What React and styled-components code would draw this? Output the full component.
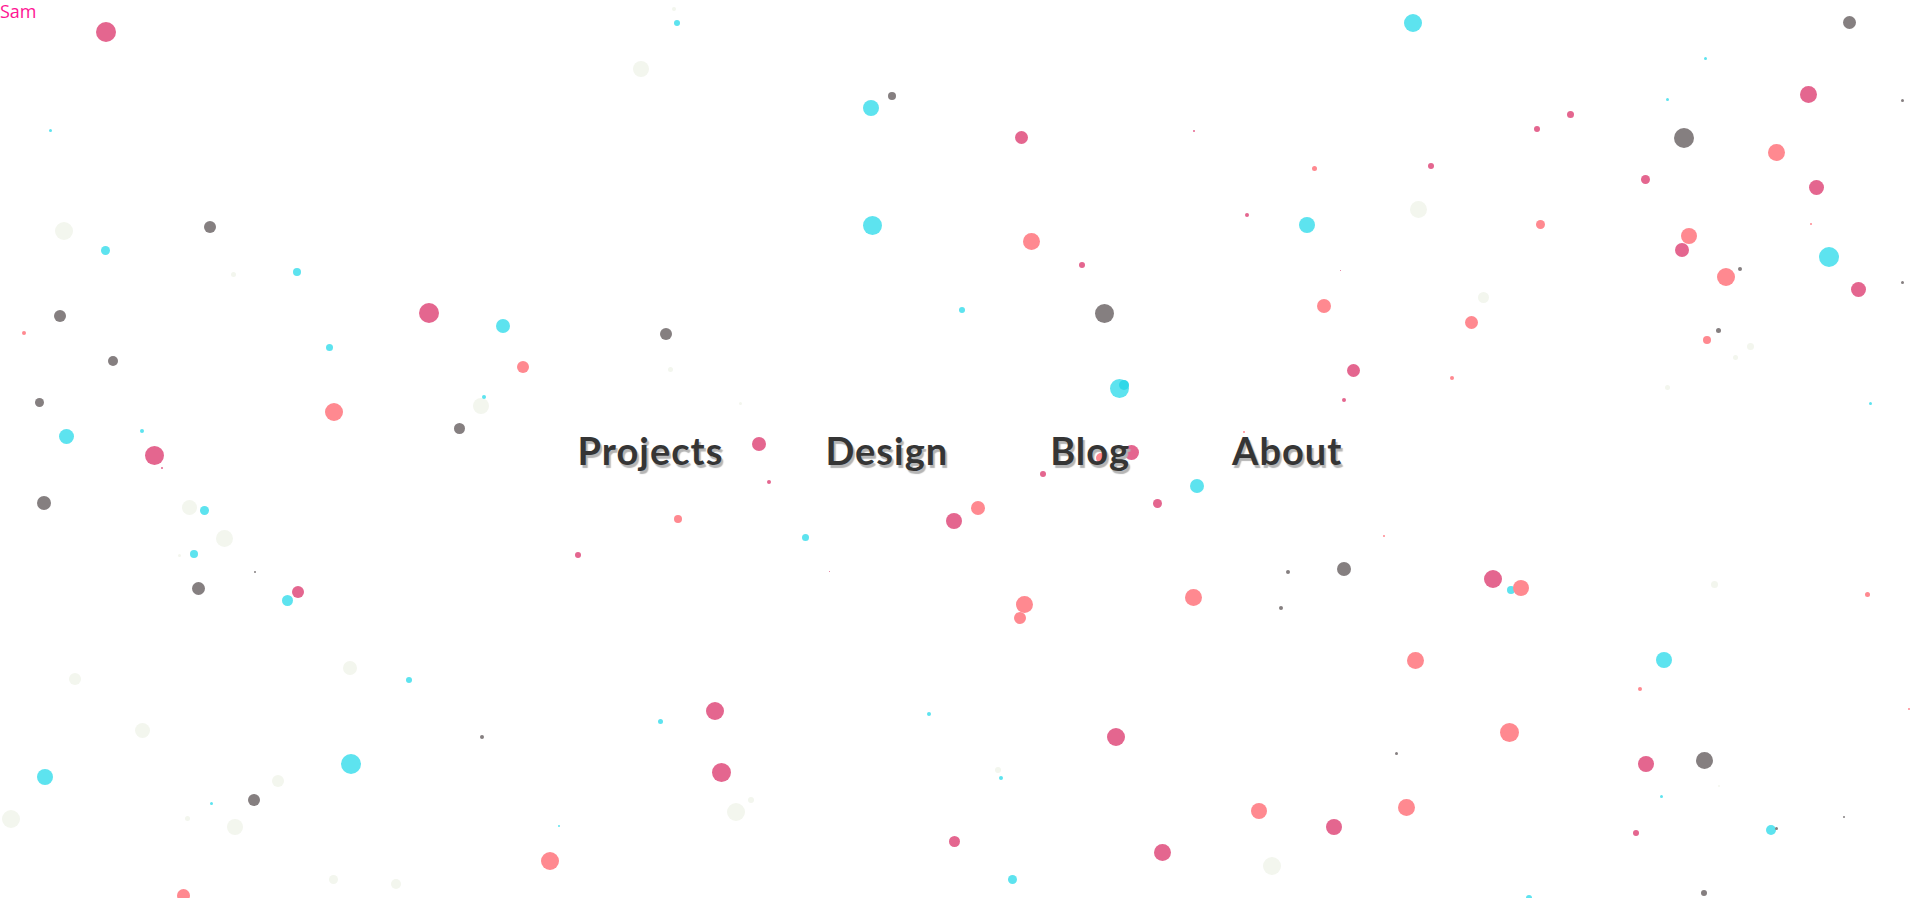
import React from "react";
import styled, { createGlobalStyle } from "styled-components";

const GlobalStyle = createGlobalStyle`
  html, body {
    margin: 0;
    padding: 0;
    background: #fff;
  }
  body {
    font-family: "Open Sans", "Liberation Sans", sans-serif;
    overflow: hidden;
  }
`;

const tones = {
  m: "#e4668f",
  s: "#ff8990",
  c: "#5de3ef",
  cd: "#2fd8e8",
  g: "#857f80",
  p: "#f3f6ee",
};

// particles as [x, y, diameter, tone]
const dots = [
  [106, 32, 20, "m"], [50, 130, 3, "c"], [64, 231, 18, "p"], [105, 250, 9, "c"],
  [210, 227, 12, "g"], [233, 274, 5, "p"], [297, 272, 8, "c"], [60, 316, 12, "g"],
  [24, 333, 4, "s"], [113, 361, 10, "g"], [39, 402, 9, "g"], [66, 436, 15, "c"],
  [142, 431, 4, "c"], [154, 455, 19, "m"], [429, 313, 20, "m"], [329, 347, 7, "c"],
  [503, 326, 14, "c"], [523, 367, 12, "s"], [334, 412, 18, "s"], [481, 406, 16, "p"],
  [484, 397, 4, "c"], [459, 428, 11, "g"], [641, 69, 16, "p"], [162, 468, 2, "m"],
  [44, 503, 14, "g"], [189, 507, 15, "p"], [204, 510, 9, "c"], [224, 538, 17, "p"],
  [179, 555, 3, "p"], [194, 554, 8, "c"], [255, 572, 2, "g"], [198, 588, 13, "g"],
  [298, 592, 12, "m"], [287, 600, 11, "c"], [578, 555, 6, "m"], [75, 679, 12, "p"],
  [350, 668, 14, "p"], [409, 680, 6, "c"], [142, 730, 15, "p"], [482, 737, 4, "g"],
  [45, 777, 16, "c"], [351, 764, 20, "c"], [278, 781, 12, "p"], [211, 803, 3, "c"],
  [254, 800, 12, "g"], [11, 819, 18, "p"], [187, 818, 5, "p"], [235, 827, 16, "p"],
  [559, 826, 2, "c"], [550, 861, 18, "s"], [333, 879, 9, "p"], [396, 884, 10, "p"],
  [183, 895, 13, "s"],

  [677, 23, 6, "c"], [674, 9, 4, "p"], [871, 108, 16, "c"], [892, 96, 8, "g"],
  [1021, 137, 13, "m"], [1194, 131, 2, "m"], [872, 225, 19, "c"], [1031, 241, 17, "s"],
  [1082, 265, 6, "m"], [1247, 215, 4, "m"], [962, 310, 6, "c"], [1104, 313, 19, "g"],
  [666, 334, 12, "g"], [670, 369, 5, "p"], [740, 403, 3, "p"], [1119, 388, 19, "c"],
  [1124, 385, 10, "cd"], [759, 444, 14, "m"], [1101, 458, 10, "s"], [1131, 452, 15, "m"],
  [1244, 432, 2, "s"],

  [769, 482, 4, "m"], [678, 519, 8, "s"], [805, 537, 7, "c"], [829, 571, 1, "m"],
  [954, 521, 16, "m"], [978, 508, 14, "s"], [1043, 474, 6, "m"], [1197, 486, 14, "c"],
  [1157, 503, 9, "m"], [1024, 604, 17, "s"], [1020, 618, 12, "s"], [1193, 597, 17, "s"],
  [715, 711, 18, "m"], [660, 721, 5, "c"], [929, 714, 4, "c"], [1116, 737, 18, "m"],
  [721, 772, 19, "m"], [751, 800, 6, "p"], [736, 812, 18, "p"], [998, 770, 6, "p"],
  [1001, 778, 4, "c"], [1259, 811, 16, "s"], [954, 841, 11, "m"], [1162, 852, 17, "m"],
  [1272, 866, 18, "p"], [1012, 879, 9, "c"],

  [1413, 23, 18, "c"], [1849, 22, 13, "g"], [1705, 58, 3, "c"], [1667, 99, 3, "c"],
  [1808, 94, 17, "m"], [1902, 100, 3, "g"], [1570, 114, 7, "m"], [1537, 129, 6, "m"],
  [1684, 138, 20, "g"], [1776, 152, 17, "s"], [1314, 168, 5, "s"], [1431, 166, 6, "m"],
  [1645, 179, 9, "m"], [1816, 187, 15, "m"], [1307, 225, 16, "c"], [1418, 209, 17, "p"],
  [1540, 224, 9, "s"], [1811, 224, 2, "s"], [1689, 236, 16, "s"], [1682, 250, 14, "m"],
  [1740, 269, 4, "g"], [1726, 277, 18, "s"], [1829, 257, 20, "c"], [1858, 289, 15, "m"],
  [1902, 282, 3, "g"], [1340, 270, 1, "m"], [1324, 306, 14, "s"], [1483, 297, 11, "p"],
  [1471, 322, 13, "s"], [1718, 330, 5, "g"], [1707, 340, 8, "s"], [1750, 346, 7, "p"],
  [1735, 357, 5, "p"], [1353, 370, 13, "m"], [1452, 378, 4, "s"], [1344, 400, 4, "m"],
  [1667, 387, 5, "p"], [1870, 403, 3, "c"],

  [1384, 536, 2, "s"], [1288, 572, 4, "g"], [1344, 569, 14, "g"], [1281, 608, 4, "g"],
  [1493, 579, 18, "m"], [1511, 590, 8, "c"], [1521, 588, 16, "s"], [1714, 584, 7, "p"],
  [1867, 594, 5, "s"], [1415, 660, 17, "s"], [1664, 660, 16, "c"], [1640, 689, 4, "s"],
  [1909, 709, 2, "s"], [1509, 732, 19, "s"], [1396, 753, 3, "g"], [1646, 764, 16, "m"],
  [1704, 760, 17, "g"], [1661, 796, 3, "c"], [1719, 786, 2, "p"], [1406, 807, 17, "s"],
  [1334, 827, 16, "m"], [1636, 833, 6, "m"], [1771, 830, 10, "c"], [1776, 828, 3, "g"],
  [1844, 817, 2, "g"], [1704, 893, 6, "g"], [1529, 898, 6, "c"],
];

const links = ["Projects", "Design", "Blog", "About"];

const Page = styled.div`
  position: relative;
  display: grid;
  width: 100vw;
  height: 100vh;
  overflow: hidden;
  background: #fff;
`;

const Particles = styled.div`
  position: absolute;
  inset: 0;
  pointer-events: none;
`;

const Dot = styled.span`
  position: absolute;
  border-radius: 50%;
  background: ${(p) => tones[p.$tone]};
`;

const Brand = styled.a`
  grid-area: 1 / 1;
  align-self: start;
  justify-self: start;
  position: relative;
  font-family: "Open Sans", "Liberation Sans", sans-serif;
  font-size: 18px;
  line-height: 1.3;
  color: #ff1493;
  text-decoration: none;
`;

const Nav = styled.nav`
  grid-area: 1 / 1;
  align-self: center;
  justify-self: center;
  position: relative;
  display: flex;
  gap: 102px;
  margin-top: 4px;
`;

const NavLink = styled.a`
  font-family: Lato, "Liberation Sans", sans-serif;
  font-weight: 700;
  font-size: 38px;
  line-height: 1.2;
  letter-spacing: 1px;
  color: #353535;
  text-decoration: none;
  text-shadow: 2px 3px 1px #b5b5b5;
`;

export default function App() {
  return (
    <>
      <GlobalStyle />
      <Page>
        <Particles>
          {dots.map(([x, y, d, tone], i) => (
            <Dot
              key={i}
              $tone={tone}
              style={{ left: x - d / 2, top: y - d / 2, width: d, height: d }}
            />
          ))}
        </Particles>
        <Brand href="#">Sam</Brand>
        <Nav>
          {links.map((label) => (
            <NavLink key={label} href="#">
              {label}
            </NavLink>
          ))}
        </Nav>
      </Page>
    </>
  );
}
